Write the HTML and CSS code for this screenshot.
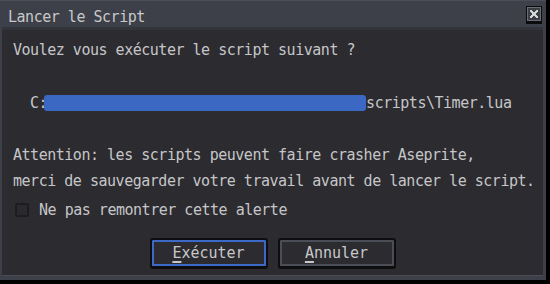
FILE: index.html
```html
<!DOCTYPE html>
<html lang="fr">
<head>
<meta charset="utf-8">
<title>Lancer le Script</title>
<link rel="stylesheet" href="styles.css">
</head>
<body>
<div class="window">
  <div class="titlebar">
    <span class="title">Lancer le Script</span>
    <span class="close" aria-label="Fermer">
      <svg width="16" height="18" viewBox="0 0 16 18" shape-rendering="crispEdges">
        <rect x="0" y="0" width="16" height="18" fill="#0c0c0e"/>
        <rect x="1" y="1" width="14" height="14" fill="#6a6d73"/>
        <rect x="2" y="2" width="12" height="12" fill="#3b3e45"/>
        <path d="M4 4h2v1h1v1h2v-1h1v-1h2v2h-1v1h-1v2h1v1h1v2h-2v-1h-1v-1h-2v1h-1v1h-2v-2h1v-1h1v-2h-1v-1h-1z" fill="#d4d4d4"/>
      </svg>
    </span>
  </div>
  <div class="sep"></div>
  <div class="content">
    <div class="line first">Voulez vous exécuter le script suivant ?</div>
    <div class="line path">C:<span class="sel"></span>scripts\Timer.lua</div>
    <div class="line warn">Attention: les scripts peuvent faire crasher Aseprite,</div>
    <div class="line warn2">merci de sauvegarder votre travail avant de lancer le script.</div>
    <label class="line check"><span class="box"></span>Ne pas remontrer cette alerte</label>
    <div class="buttons">
      <button class="btn focus"><u>E</u>xécuter</button>
      <button class="btn"><u>A</u>nnuler</button>
    </div>
  </div>
</div>
</body>
</html>
```
FILE: styles.css
```css
* { box-sizing: border-box; }
html, body {
  margin: 0;
  padding: 0;
  background: #000;
  width: 550px;
  height: 284px;
  overflow: hidden;
}
body {
  font-family: "DejaVu Sans Mono", "Liberation Mono", monospace;
  font-size: 15px;
  letter-spacing: -0.48px;
  color: #c6c6c8;
}
.window {
  width: 546px;
  height: 280px;
  background: #2b2b30;
  border-style: solid;
  border-color: #3d4048;
  border-width: 0 3px 4px 2px;
  box-shadow: inset 0 -1px 0 #4a4d55;
  display: flex;
  flex-direction: column;
}
.titlebar {
  height: 27px;
  background: #3d4048;
  border-top: 1px solid #4a4d55;
  margin: 0 -3px 0 -2px;
  padding: 8px 4px 0 8px;
  display: flex;
  justify-content: space-between;
  align-items: flex-start;
  line-height: 16px;
}
.title { color: #c8c8ca; }
.close {
  display: block;
  width: 16px;
  height: 18px;
  margin-top: -3px;
}
.close svg { display: block; }
.sep {
  height: 3px;
  background: #33353c;
}
.content {
  padding: 12px 0 0 11px;
  display: flex;
  flex-direction: column;
  align-items: flex-start;
}
.line {
  line-height: 16px;
  height: 16px;
  white-space: pre;
}
.path {
  margin-top: 37px;
  padding-left: 17px;
  display: flex;
  align-items: center;
}
.sel {
  display: inline-block;
  width: 322px;
  height: 16px;
  margin-left: -3px;
  background: #3b68c3;
  border-radius: 3px;
}
.warn { margin-top: 36px; }
.warn2 { margin-top: 10px; }
.check {
  margin-top: 13px;
  padding-left: 2px;
  display: flex;
  align-items: center;
  gap: 10px;
}
.box {
  width: 14px;
  height: 14px;
  border: 2px solid #1d1d21;
  background: #29292e;
  border-radius: 2px;
}
.buttons {
  margin-top: 20px;
  align-self: stretch;
  margin-left: -11px;
  display: flex;
  justify-content: center;
  gap: 10px;
}
.btn {
  width: 118px;
  height: 31px;
  padding: 0 0 1px 0;
  font: inherit;
  letter-spacing: 0;
  color: #c8c8ca;
  background: #2b2b30;
  border: 2px solid #0e0e10;
  border-bottom-width: 3px;
  border-radius: 3px;
  box-shadow: inset 0 0 0 2px #4b4e56;
}
.btn.focus {
  box-shadow: inset 0 0 0 2px #3d69c6;
}
.btn u {
  text-decoration: underline;
  text-underline-offset: 3px;
  text-decoration-thickness: 2px;
}
```
